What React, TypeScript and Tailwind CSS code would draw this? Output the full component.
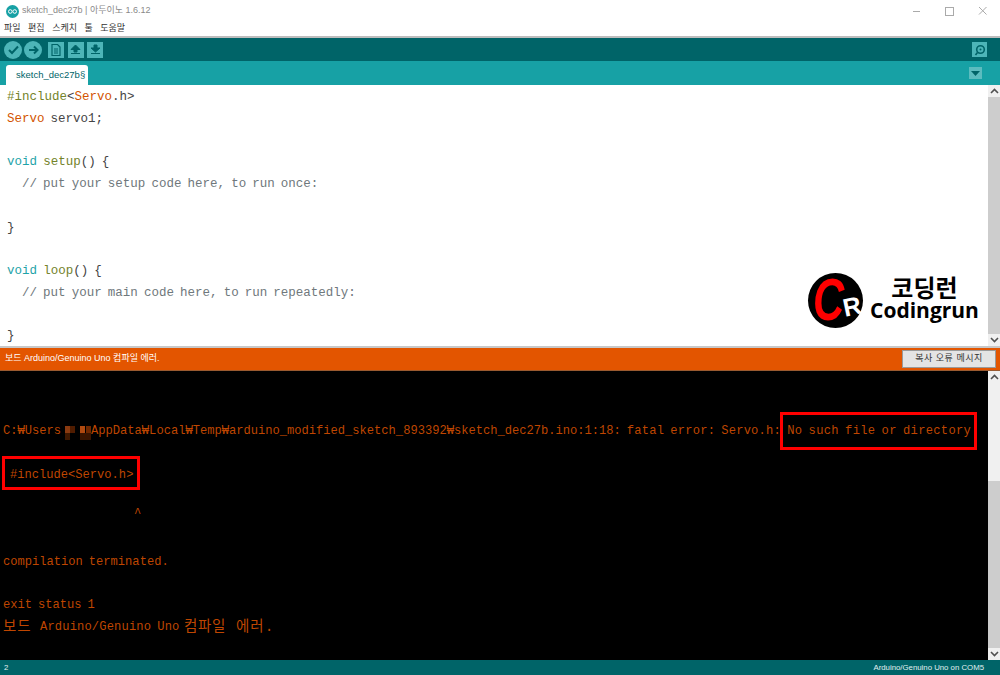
import React from 'react'

const mono = "font-['Liberation_Mono','Noto_Sans_CJK_KR',monospace]"
const kr = "font-['Liberation_Sans','Noto_Sans_CJK_KR',sans-serif]"

const Green = ({ children }: { children: React.ReactNode }) => <span className="text-[#74832a]">{children}</span>
const Orange = ({ children }: { children: React.ReactNode }) => <span className="text-[#d35400]">{children}</span>
const Teal = ({ children }: { children: React.ReactNode }) => <span className="text-[#1fa3a8]">{children}</span>
const Comment = ({ children }: { children: React.ReactNode }) => <span className="text-[#6f787c]">{children}</span>

function ToolSquare({ children }: { children: React.ReactNode }) {
  return <div className="w-[16px] h-[16px] bg-[#4db5b8] flex items-center justify-center">{children}</div>
}

function ToolCircle({ children }: { children: React.ReactNode }) {
  return <div className="w-[18px] h-[18px] rounded-full bg-[#4db5b8] flex items-center justify-center">{children}</div>
}

function Arrow({ up }: { up?: boolean }) {
  return (
    <svg width="9" height="6" viewBox="0 0 9 6">
      <path d={up ? "M1 5 L4.5 1.5 L8 5" : "M1 1 L4.5 4.5 L8 1"} fill="none" stroke="#505050" strokeWidth="1.6" />
    </svg>
  )
}

function Scrollbar({ thumbTop }: { thumbTop: number }) {
  return (
    <div className="w-[12px] h-full shrink-0 bg-[#f0f0f0] flex flex-col">
      <div className="h-[12px] flex items-center justify-center shrink-0"><Arrow up /></div>
      <div className="flex-1 flex flex-col">
        <div className="shrink-0" style={{ height: thumbTop }} />
        <div className="flex-1 bg-[#cdcdcd]" />
      </div>
      <div className="h-[12px] flex items-center justify-center shrink-0"><Arrow /></div>
    </div>
  )
}

function Logo() {
  return (
    <div className="absolute left-[808px] top-[273px] w-[175px] h-[55px] flex items-center">
      <div className="relative w-[55px] h-[55px] rounded-full bg-black shrink-0">
        <span className="absolute left-[5px] top-[-3px] w-[44px] origin-left scale-x-[0.72] font-['Liberation_Sans',sans-serif] italic font-bold text-[60px] leading-[60px] text-[#ff0000]">C</span>
        <span className="absolute left-[35px] top-[21px] rotate-[-12deg] font-['Liberation_Sans',sans-serif] font-bold text-[25px] leading-[25px] text-white">R</span>
      </div>
      <div className="flex flex-col items-center ml-[7px] mt-[-5px]">
        <span className="font-['Noto_Sans_CJK_KR',sans-serif] font-bold text-[24px] leading-[24px] text-black">코딩런</span>
        <span className="font-['Open_Sans',sans-serif] font-bold text-[21px] leading-[22px] text-black">Codingrun</span>
      </div>
    </div>
  )
}

export default function App() {
  return (
    <div className="relative w-[1000px] h-[675px] overflow-hidden bg-white flex flex-col">
      {/* title bar */}
      <div className="h-[22px] shrink-0 flex items-center">
        <svg className="ml-[6px]" width="13" height="13" viewBox="0 0 13 13">
          <circle cx="6.5" cy="6.5" r="6.5" fill="#17a1a5" />
          <circle cx="4.3" cy="6.5" r="1.8" fill="none" stroke="#fff" strokeWidth="1" />
          <circle cx="8.7" cy="6.5" r="1.8" fill="none" stroke="#fff" strokeWidth="1" />
        </svg>
        <span className={`${kr} ml-[3px] text-[9px] text-[#8a8a8a]`}>sketch_dec27b | 아두이노 1.6.12</span>
        <div className="ml-auto mr-[1px] flex items-center">
          <svg width="33" height="22" viewBox="0 0 33 22"><path d="M13 11.5 H20" stroke="#aaa" /></svg>
          <svg width="33" height="22" viewBox="0 0 33 22"><rect x="12.5" y="7.5" width="8" height="8" fill="none" stroke="#aaa" /></svg>
          <svg width="33" height="22" viewBox="0 0 33 22"><path d="M13 7 L20.5 14.5 M20.5 7 L13 14.5" stroke="#aaa" /></svg>
        </div>
      </div>
      {/* menu */}
      <div className={`${kr} h-[14px] shrink-0 flex items-center gap-[7.5px] pl-[4px] text-[9px] text-[#333]`}>
        <span>파일</span>
        <span>편집</span>
        <span>스케치</span>
        <span>툴</span>
        <span>도움말</span>
      </div>
      <div className="h-[2px] shrink-0 bg-[#bdbdbd]" />
      {/* toolbar */}
      <div className="h-[23px] shrink-0 bg-[#006468] flex items-center pl-[4px] pr-[13px]">
        <div className="flex items-center gap-[2px]">
          <ToolCircle>
            <svg width="11" height="10" viewBox="0 0 11 10"><path d="M1 5 L4 8 L10 1.5" fill="none" stroke="#006468" strokeWidth="2" /></svg>
          </ToolCircle>
          <ToolCircle>
            <svg width="11" height="10" viewBox="0 0 11 10"><path d="M1 5 H9 M6 1.5 L9.5 5 L6 8.5" fill="none" stroke="#006468" strokeWidth="2" /></svg>
          </ToolCircle>
        </div>
        <div className="flex items-center gap-[3.5px] ml-[6px]">
          <ToolSquare>
            <svg width="10" height="12" viewBox="0 0 10 12"><path d="M1 .5 H6.5 L9 3 V11.5 H1 Z M3 5 H7 M3 7 H7 M3 9 H7" fill="none" stroke="#006468" strokeWidth="1.2" /></svg>
          </ToolSquare>
          <ToolSquare>
            <svg width="11" height="11" viewBox="0 0 11 11"><path d="M5.5 1 L10 5.5 H7 V8 H4 V5.5 H1 Z M1 9.5 H10" fill="#006468" stroke="#006468" strokeWidth="1" /></svg>
          </ToolSquare>
          <ToolSquare>
            <svg width="11" height="11" viewBox="0 0 11 11"><path d="M4 1 H7 V4 H10 L5.5 8 L1 4 H4 Z M1 9.5 H10" fill="#006468" stroke="#006468" strokeWidth="1" /></svg>
          </ToolSquare>
        </div>
        <div className="ml-auto w-[15px] h-[15px] bg-[#4db5b8] flex items-center justify-center">
          <svg width="12" height="12" viewBox="0 0 12 12">
            <circle cx="6.5" cy="5.5" r="3.8" fill="none" stroke="#006468" strokeWidth="1.6" />
            <circle cx="6.5" cy="5.5" r="1" fill="#006468" />
            <path d="M3.5 8.5 L1.5 11" stroke="#006468" strokeWidth="1.6" />
          </svg>
        </div>
      </div>
      {/* tabs */}
      <div className="h-[24px] shrink-0 bg-[#17a1a5] flex items-end pl-[6px] pr-[18px]">
        <div className={`${kr} w-[82px] h-[20px] bg-white rounded-t-[3px] flex items-center pl-[10px] text-[9.5px] text-[#006468]`}>sketch_dec27b§</div>
        <div className="ml-auto mb-[6px] w-[13px] h-[12px] bg-[#5cbcbf] flex items-center justify-center">
          <svg width="9" height="5" viewBox="0 0 9 5"><path d="M0 0 H9 L4.5 5 Z" fill="#006468" /></svg>
        </div>
      </div>
      {/* editor */}
      <div className="h-[261px] shrink-0 flex overflow-hidden">
        <div className={`${mono} flex-1 pt-[2px] pl-[7px] text-[12.5px] leading-[21.75px] text-[#444] whitespace-pre [word-spacing:-1.4px]`}>
          <div><Green>#include</Green>{'<'}<Orange>Servo</Orange>{'.h>'}</div>
          <div><Orange>Servo</Orange> servo1;</div>
          <div>{' '}</div>
          <div><Teal>void</Teal> <Green>setup</Green>() {'{'}</div>
          <div className="pl-[15px]"><Comment>// put your setup code here, to run once:</Comment></div>
          <div>{' '}</div>
          <div>{'}'}</div>
          <div>{' '}</div>
          <div><Teal>void</Teal> <Green>loop</Green>() {'{'}</div>
          <div className="pl-[15px]"><Comment>// put your main code here, to run repeatedly:</Comment></div>
          <div>{' '}</div>
          <div>{'}'}</div>
        </div>
        <Scrollbar thumbTop={0} />
      </div>
      <div className="h-[2px] shrink-0 bg-[#c8c8c8]" />
      {/* status */}
      <div className="h-[22px] shrink-0 bg-[#e35500] flex items-center pl-[5px] pr-[4px]">
        <span className={`${kr} text-[9px] text-white`}>보드 Arduino/Genuino Uno 컴파일 에러.</span>
        <div className={`${kr} ml-auto w-[94px] h-[18px] bg-[#e4e4e4] border border-[#9a9a9a] flex items-center justify-center text-[9px] tracking-[0.5px] text-[#333]`}>복사 오류 메시지</div>
      </div>
      <div className="h-[1px] shrink-0 bg-[#9a5a30]" />
      {/* console */}
      <div className="h-[289px] shrink-0 bg-black flex overflow-hidden">
        <div className={`${mono} flex-1 pl-[3px] pt-[50px] text-[12.1px] leading-[21.8px] text-[#bf4600] whitespace-pre [word-spacing:-1.26px]`}>
          <div className="flex">
            <span>C:₩Users</span>
            <span className="flex flex-col w-[26px] mt-[5px] ml-[4px]">
              <span className="flex h-[7px]">
                <span className="w-[5px] bg-[#8a3a10]" />
                <span className="w-[5px] bg-[#501c00]" />
                <span className="w-[5px]" />
                <span className="w-[5px] bg-[#b04a10]" />
                <span className="w-[1px]" />
                <span className="w-[5px] bg-[#702800]" />
              </span>
              <span className="flex h-[7px]">
                <span className="w-[5px] bg-[#401800]" />
                <span className="w-[10px]" />
                <span className="w-[11px] bg-[#3a1500]" />
              </span>
            </span>
            <span>AppData₩Local₩Temp₩arduino_modified_sketch_893392₩sketch_dec27b.ino:1:18: </span>
            <span className="tracking-[0.2px]">fatal error: Servo.h: </span>
            <span className="tracking-[0.3px]">No such file or directory</span>
          </div>
          <div>{' '}</div>
          <div className="pl-[7px]">#include{'<'}Servo.h{'>'}</div>
          <div>{' '}</div>
          <div className="pl-[131px] mt-[-4px] mb-[4px]">^</div>
          <div>{' '}</div>
          <div>compilation terminated.</div>
          <div>{' '}</div>
          <div>exit status 1</div>
          <div className="flex items-center">
            <span className="text-[14.5px] tracking-[0.8px] w-[37px]">보드</span>
            <span className="tracking-[0.15px] w-[144px]">Arduino/Genuino Uno</span>
            <span className="text-[14.5px] tracking-[0.6px] w-[52px]">컴파일</span>
            <span className="text-[14.5px] tracking-[1px]">에러.</span>
          </div>
        </div>
        <Scrollbar thumbTop={98} />
      </div>
      {/* footer */}
      <div className={`${kr} h-[15px] shrink-0 bg-[#006468] flex items-center justify-between pl-[4px] pr-[16px] text-[7.8px] text-[#e0f0f0]`}>
        <span>2</span>
        <span>Arduino/Genuino Uno on COM5</span>
      </div>
      <Logo />
      <div className="absolute left-[780px] top-[412px] w-[197px] h-[38px] border-[3px] border-[#ff0000]" />
      <div className="absolute left-[2px] top-[456px] w-[138px] h-[34px] border-[3px] border-[#ff0000]" />
    </div>
  )
}
